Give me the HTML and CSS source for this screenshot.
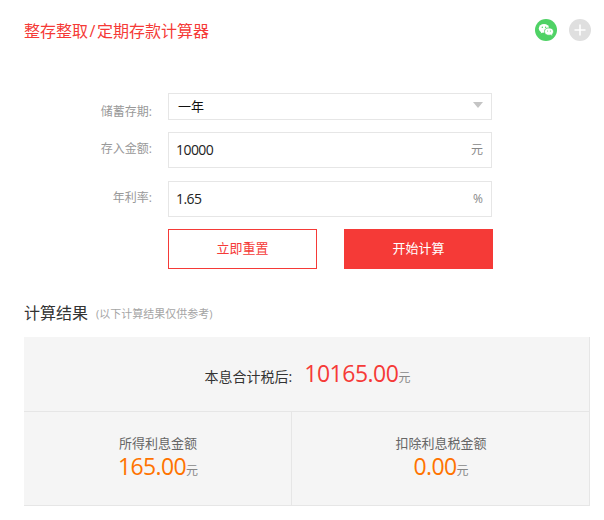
FILE: index.html
```html
<!DOCTYPE html>
<html lang="zh-CN">
<head>
<meta charset="utf-8">
<title>整存整取/定期存款计算器</title>
<link rel="stylesheet" href="styles.css">
</head>
<body>
<main class="page">
  <header class="head">
    <h1 class="title">整存整取<span class="slash">/</span>定期存款计算器</h1>
    <div class="share">
      <span class="share-btn wechat">
        <svg viewBox="0 0 22 22" width="22" height="22" aria-hidden="true">
          <ellipse cx="9" cy="9.4" rx="5.2" ry="4.3" fill="#fff"/>
          <path d="M6.4 12.4l-.8 2 2.4-1.2z" fill="#fff"/>
          <ellipse cx="14" cy="12.6" rx="4.5" ry="3.7" fill="#fff" stroke="#4fd265" stroke-width=".8"/>
          <path d="M16 15.6l1.2 1.3-.2-2z" fill="#fff"/>
          <circle cx="7.3" cy="8.2" r=".7" fill="#4fd265"/>
          <circle cx="10.6" cy="8.2" r=".7" fill="#4fd265"/>
          <circle cx="12.6" cy="12" r=".55" fill="#4fd265"/>
          <circle cx="15.4" cy="12" r=".55" fill="#4fd265"/>
        </svg>
      </span>
      <span class="share-btn plus">
        <svg viewBox="0 0 22 22" width="22" height="22" aria-hidden="true">
          <path d="M11 5.5v11M5.5 11h11" stroke="#fff" stroke-width="1.6" fill="none"/>
        </svg>
      </span>
    </div>
  </header>

  <form class="form">
    <div class="row row-select">
      <span class="label">储蓄存期:</span>
      <div class="field field-select"><span class="value">一年</span><span class="arrow"></span></div>
    </div>
    <div class="row row-money">
      <span class="label">存入金额:</span>
      <div class="field"><span class="value">10000</span><span class="unit">元</span></div>
    </div>
    <div class="row row-rate">
      <span class="label">年利率:</span>
      <div class="field"><span class="value">1.65</span><span class="unit">%</span></div>
    </div>
    <div class="actions">
      <div class="btn btn-reset">立即重置</div>
      <div class="btn btn-start">开始计算</div>
    </div>
  </form>

  <section class="result">
    <h2 class="result-head">计算结果<small class="note">(以下计算结果仅供参考)</small></h2>
    <div class="panel">
      <div class="total"><span class="total-label">本息合计税后:</span><span class="total-num">10165.00</span><span class="yuan">元</span></div>
      <div class="split">
        <div class="cell">
          <div class="cell-label">所得利息金额</div>
          <div class="cell-value"><span class="cell-num">165.00</span><span class="yuan">元</span></div>
        </div>
        <div class="cell">
          <div class="cell-label">扣除利息税金额</div>
          <div class="cell-value"><span class="cell-num">0.00</span><span class="yuan">元</span></div>
        </div>
      </div>
    </div>
  </section>
</main>
</body>
</html>
```
FILE: styles.css
```css
* { box-sizing: border-box; }
html, body { margin: 0; padding: 0; background: #fff; }
body {
  font-family: "Open Sans", "Noto Sans CJK SC", sans-serif;
  color: #333;
  font-size: 13px;
}
.page { width: 604px; height: 520px; padding: 19px 13px 0 24px; overflow: hidden; }

.head { display: flex; justify-content: space-between; align-items: center; height: 22px; }
.title { margin: 0; padding-top: 2px; font-size: 16px; font-weight: 400; color: #f53a37; line-height: 22px; }
.slash { margin: 0 1.6px; }
.share { display: flex; gap: 12px; }
.share-btn { width: 22px; height: 22px; border-radius: 50%; display: block; }
.share-btn svg { display: block; }
.wechat { background: #4fd265; }
.plus { background: #dfdfdf; }

.form { margin-top: 52px; }
.row { display: flex; align-items: center; }
.row-select { height: 27px; }
.row-money { height: 36px; margin-top: 12px; }
.row-rate { height: 36px; margin-top: 13px; }
.label { width: 144px; padding-right: 16px; text-align: right; font-size: 12px; color: #999; }
.row-select .label { padding-top: 9px; }
.row-money .label { padding-bottom: 4px; }
.row-rate .label { padding-bottom: 5px; }
.field {
  width: 324px; height: 100%;
  border: 1px solid #e6e6e6;
  display: flex; align-items: center; justify-content: space-between;
  padding: 0 8px 2px 7px;
}
.value { font-size: 14px; color: #222; letter-spacing: -.55px; }
.field-select { padding-left: 9px; padding-right: 8px; padding-bottom: 3px; }
.field-select .value { font-size: 13px; color: #111; letter-spacing: 0; }
.arrow { width: 0; height: 0; border: 5px solid transparent; border-top: 6px solid #c4c4c4; border-bottom: 0; }
.unit { font-size: 12px; color: #888; }

.actions { display: flex; gap: 27px; margin: 12px 0 0 144px; }
.btn { width: 149px; height: 40px; display: flex; align-items: center; justify-content: center; font-size: 13px; padding-bottom: 3px; }
.btn-reset { border: 1px solid #f53a37; color: #f53a37; background: #fff; }
.btn-start { background: #f53a37; color: #fff; }

.result { margin-top: 31px; }
.result-head { margin: 0; font-size: 16px; font-weight: 400; color: #333; line-height: 24px; display: flex; align-items: center; }
.note { font-size: 11px; color: #a5a5a5; margin-left: 8px; padding-top: 2px; }
.panel {
  margin-top: 11px; width: 566px; height: 169px;
  background: #f5f5f5;
  border-right: 1px solid #e6e6e6;
  border-bottom: 1px solid #e6e6e6;
  display: flex; flex-direction: column;
}
.total { height: 75px; border-bottom: 1px solid #e6e6e6; display: flex; align-items: baseline; justify-content: center; padding: 19px 0 0 2px; line-height: 34px; }
.total-label { font-size: 14px; color: #333; margin-right: 12px; }
.total-num { font-size: 23px; color: #f53a37; letter-spacing: -.5px; }
.yuan { font-size: 12px; color: #888; }
.split { flex: 1; display: flex; }
.cell { flex: 0 0 268px; text-align: center; padding: 21px 0 0 1px; }
.cell:first-child { border-right: 1px solid #e6e6e6; }
.cell + .cell { flex: 1; }
.cell-label { font-size: 13px; color: #666; line-height: 20px; }
.cell-value { line-height: 26px; }
.cell-num { font-size: 23px; color: #ff7300; letter-spacing: -.6px; }
```
